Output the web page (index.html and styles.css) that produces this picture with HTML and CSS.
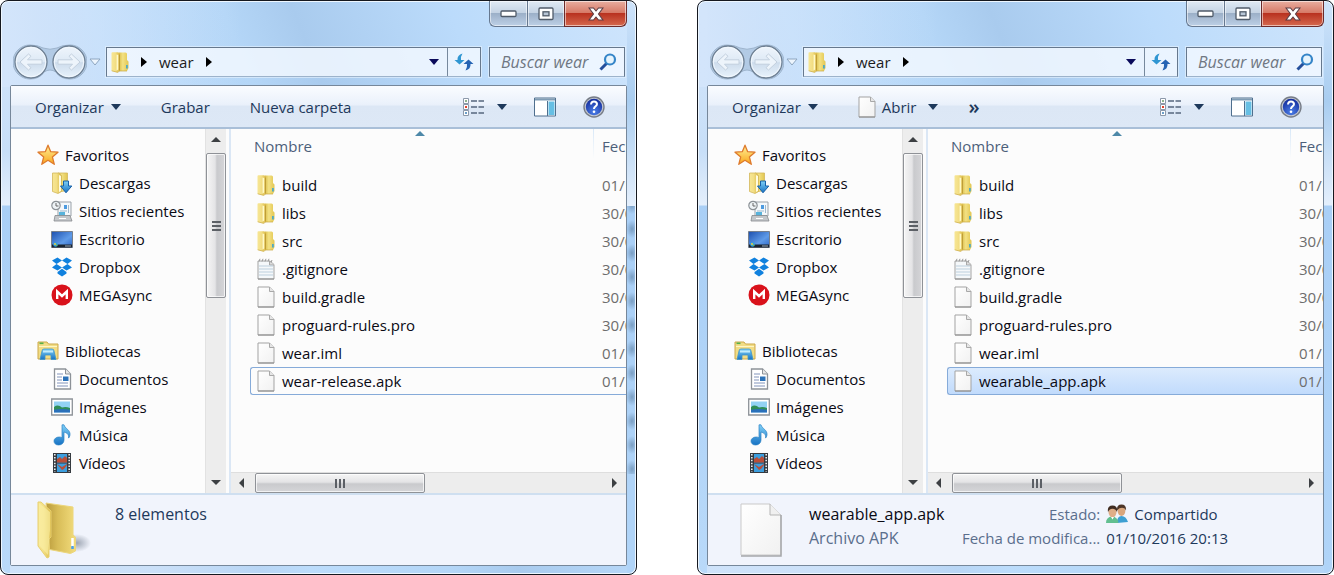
FILE: index.html
```html
<!DOCTYPE html>
<html lang="es">
<head>
<meta charset="utf-8">
<title>wear</title>
<link rel="stylesheet" href="styles.css">
</head>
<body>
<svg class="sprite" aria-hidden="true">
  <defs>
    <linearGradient id="g-folder" x1="0" x2="1"><stop offset="0" stop-color="#f7e694"/><stop offset=".45" stop-color="#f3df86"/><stop offset="1" stop-color="#d9b844"/></linearGradient>
    <linearGradient id="g-leaf" x1="0" x2="1"><stop offset="0" stop-color="#dcc04c"/><stop offset=".4" stop-color="#f3e184"/><stop offset="1" stop-color="#e2c650"/></linearGradient>
    <linearGradient id="g-folder-back" x1="0" x2="1"><stop offset="0" stop-color="#b99a3c"/><stop offset=".4" stop-color="#d8bd58"/><stop offset="1" stop-color="#f2dc7c"/></linearGradient>
    <linearGradient id="g-ball" x1="0" y1="0" x2="0" y2="1"><stop offset="0" stop-color="#eff5fc"/><stop offset=".5" stop-color="#dde9f5"/><stop offset=".52" stop-color="#cddcec"/><stop offset="1" stop-color="#e8f3fc"/></linearGradient>
    <linearGradient id="g-page" x1="0" y1="0" x2="1" y2="1"><stop offset="0" stop-color="#fff"/><stop offset="1" stop-color="#f1f1f1"/></linearGradient>
    <linearGradient id="g-star" x1="0" y1="0" x2="0" y2="1"><stop offset="0" stop-color="#fff39a"/><stop offset="1" stop-color="#f9a51b"/></linearGradient>
    <linearGradient id="g-blue" x1="0" y1="0" x2="0" y2="1"><stop offset="0" stop-color="#7fd0f7"/><stop offset="1" stop-color="#1672c4"/></linearGradient>
    <linearGradient id="g-desk" x1="0" y1="0" x2="1" y2="1"><stop offset="0" stop-color="#1c4fae"/><stop offset=".6" stop-color="#5f9be8"/><stop offset="1" stop-color="#2b64c4"/></linearGradient>
    <radialGradient id="g-help" cx=".5" cy=".8" r=".8"><stop offset="0" stop-color="#4c7fe8"/><stop offset="1" stop-color="#122a9a"/></radialGradient>
    <radialGradient id="g-shade"><stop offset="0" stop-color="#7a8494" stop-opacity=".7"/><stop offset="1" stop-color="#7a8494" stop-opacity="0"/></radialGradient>
  </defs>
  <symbol id="i-folder" viewBox="0 0 18 22">
    <path d="M8 1.500h6.500q1.500 0 1.500 1.500v6l1.500 1.500V17L16 20H8z" fill="url(#g-leaf)"/>
    <path d="M.5 2q0-.8 1-.8H7q2 .3 2 2.300v15q0 1.500-1.800 2.200L6.500 21.500.5 19.800z" fill="url(#g-folder)"/>
    <path d="M5.500 3.500 7.200 4v14.500l-1.700 1z" fill="#fff9c8"/>
    <path d="M8.500 3.500v16" stroke="#bb9a35" stroke-width=".9"/>
    <path d="M.7 19.800 6.500 21.300 9 20h7" fill="none" stroke="#c9a83e" stroke-width=".7"/>
    <rect x="15" y="14" width="1.800" height="3.500" fill="#4fa9c4"/>
  </symbol>
  <symbol id="i-file" viewBox="0 0 18 22">
    <path d="M1 1h11.500L17 5.500V21H1z" fill="url(#g-page)" stroke="#a3a3a3"/>
    <path d="M12.500 1v4.500H17" fill="#e6e6e6" stroke="#a8a8a8"/>
    <path d="M1 21h16" stroke="#8c8c8c"/>
  </symbol>
  <symbol id="i-note" viewBox="0 0 18 22">
    <path d="M1 3h12l4 3.500V21H1z" fill="#f5f8fa" stroke="#a3a3a3"/>
    <path d="M12.500 3v4H17" fill="#ddd" stroke="#a8a8a8"/>
    <path d="M2 8h14M2 11h14M2 14h14M2 17h14" stroke="#bccfdd"/>
    <path d="M2 3.500 3 .8M5 3.500 6 .8M8 3.500 9 .8M11 3.500 12 .8M14 4.500 15 2" stroke="#999"/>
    <path d="M1 21h16" stroke="#8c8c8c"/>
  </symbol>
  <symbol id="i-star" viewBox="0 0 22 22">
    <path d="M11 1.200l2.700 6.500 7.300.5-5.600 4.700 1.900 7.400L11 16.300 4.800 20.300l1.900-7.400L1 8.200l7.300-.5z" fill="url(#g-star)" stroke="#de7a2c" stroke-width="1.300" stroke-linejoin="round"/>
  </symbol>
  <symbol id="i-download" viewBox="0 0 22 22">
    <path d="M7 1h9.500v17.500L7 20z" fill="url(#g-leaf)" stroke="#d3b75a" stroke-width=".8"/>
    <path d="M1.500 1h6l3 2.500v16L7 21.500 1.500 19.500z" fill="url(#g-folder)" stroke="#d3b75a" stroke-width=".8"/>
    <path d="M8 3l2 1v15l-2 1z" fill="#fffbe0"/>
    <path d="M12.500 9h5v5h3.300L15 20.800 9.500 14h3z" fill="url(#g-blue)" stroke="#1760a8"/>
  </symbol>
  <symbol id="i-recent" viewBox="0 0 22 22">
    <path d="M7 2h13v14H7z" fill="#f4f8fb" stroke="#9aa1a8"/>
    <path d="M13 5h3v4h-3z" fill="#4d9be0"/><path d="M17.500 5v8M9 11h7" stroke="#9db8cc"/>
    <path d="M8 12h6v4H8z" fill="#57b3dc"/>
    <path d="M4 15.500h15l2 5.500H3z" fill="#c4c7ca" stroke="#85898d" stroke-width=".8"/><path d="M8 18.500h7" stroke="#fff"/>
    <circle cx="5" cy="5.500" r="4.200" fill="#eef3f6" stroke="#8c9297" stroke-width="1.200"/>
    <path d="M5 3v3h2.500" fill="none" stroke="#666"/>
  </symbol>
  <symbol id="i-desktop" viewBox="0 0 22 22">
    <path d="M.5 3.500h21v16H.5z" fill="url(#g-desk)" stroke="#767f8b"/>
    <path d="M1 16.500h20v3H1z" fill="#1b2430"/><path d="M14 18h6" stroke="#9ab"/>
    <circle cx="4.500" cy="16.500" r="2.300" fill="#2f9fe0"/><circle cx="4" cy="16" r=".9" fill="#ffd12e"/><circle cx="5.600" cy="17.200" r=".8" fill="#79c143"/>
  </symbol>
  <symbol id="i-dropbox" viewBox="0 0 22 22">
    <path d="M6.500 1.500l4.500 3-5.500 3.500L1 4.500zM15.500 1.500 21 4.500 16.500 8 11 4.500zM1 11.500 5.500 8l5.500 3.500-4.500 3zM16.500 8l4.500 3.500-5.500 3-4.500-3zM6.500 16l4.500-3.300 4.500 3.300v1.500L11 20.500 6.500 17.500z" fill="#1081de"/>
  </symbol>
  <symbol id="i-mega" viewBox="0 0 22 22">
    <circle cx="11" cy="11" r="10.500" fill="#d9121b"/>
    <path d="M6.200 15V7.500L11 12l4.800-4.500V15" fill="none" stroke="#fff" stroke-width="2.400"/>
  </symbol>
  <symbol id="i-library" viewBox="0 0 22 22">
    <path d="M1 2h9l1.500 2H21v15H1z" fill="#f1dc85" stroke="#cda94a"/>
    <path d="M2.500 3.300h4" stroke="#55b04a" stroke-width="1.600"/><path d="M2 6.500h18" stroke="#fff6c4"/>
    <path d="M5 11q0-2 2-2h8q2 0 2 2l2 8.500h-5V15H8v4.500H3z" fill="url(#g-blue)" stroke="#3f95c8" stroke-width=".8"/>
    <path d="M6 10.500h10v2H6z" fill="#c2ebfb"/>
  </symbol>
  <symbol id="i-doc" viewBox="0 0 22 22">
    <path d="M3.500 1h11L19.500 6v15h-16z" fill="#fff" stroke="#8d9298" stroke-width="1.300"/>
    <path d="M14.500 1v5h5" fill="#e8e8e8" stroke="#8d9298"/>
    <path d="M6 6h6M6 9h5M6 12h5M6 15h11M6 18h11" stroke="#8294bb"/><path d="M12 8.500h5.500V13H12z" fill="#2c72b8"/>
  </symbol>
  <symbol id="i-image" viewBox="0 0 22 22">
    <path d="M.7 3h20.600v16H.7z" fill="#fff" stroke="#8d9298" stroke-width="1.300"/>
    <path d="M3 5.500h16v11H3z" fill="#92d2f4"/><path d="M3 11q4-3 8 .5 4-1 8 .5v2H3z" fill="#2f8e58"/><path d="M3 13.800q8-1.500 16 0v2.700H3z" fill="#2a70ba"/>
  </symbol>
  <symbol id="i-music" viewBox="0 0 22 22">
    <path d="M11 .8h2c1 4 6.500 5 6 10-.2 1.700-1 3-1.500 3.300.6-3-.8-5-4.500-6.100V16c0 3-2.500 5-5.500 5S3 19.200 3 17s2.300-4 5.200-4c1.200 0 2 .2 2.800.7z" fill="url(#g-blue)" stroke="#2c82c4" stroke-width=".7"/>
  </symbol>
  <symbol id="i-video" viewBox="0 0 22 22">
    <path d="M2 1h18v20H2z" fill="#353a40"/><path d="M6 2h10v8.500H6zM6 11.500h10V20H6z" fill="#3c9ede"/>
    <path d="M6 7l3-2 2 2 3-3 2 2v4.500H6zM6 12l5 3 5-3v1l-3 4-2 1z" fill="#b94e38"/>
    <path d="M3.800 2v18M18.200 2v18" stroke="#e9eef2" stroke-width="1.600" stroke-dasharray="1.500 1.400"/>
  </symbol>
  <symbol id="i-bigfolder" viewBox="0 0 54 60">
    <ellipse cx="40" cy="43" rx="14" ry="9" fill="url(#g-shade)"/>
    <path d="M9 3 36 7v28l2.500 2v14l-5 2.500-21-4z" fill="url(#g-folder-back)" stroke="#ecd67c"/>
    <path d="M1 2h3l10 9v26l-2 2v18l-2 1L1 46z" fill="url(#g-folder)" stroke="#e8d070"/>
    <path d="M2 3 13 12v18l-2 25L2 45z" fill="#fbf0a6" opacity=".65"/>
    <path d="M35.500 38v9" stroke="#fff" stroke-width="2.500"/><path d="M35.500 46v3" stroke="#4aa0e8" stroke-width="2.500"/>
  </symbol>
  <symbol id="i-bigfile" viewBox="0 0 42 54">
    <path d="M1 1h29l11 11v40H1z" fill="url(#g-page)" stroke="#c9c9c9"/>
    <path d="M30 1v11h11" fill="#f0f0f0" stroke="#b5b5b5"/><path d="M1 53h40V12" fill="none" stroke="#a6a8ab" stroke-width="1.500"/>
  </symbol>
  <symbol id="i-nav" viewBox="0 0 74 36">
    <path d="M17 1q8 0 13 3 7 2.500 14 0 5-3 13-3a17 17 0 0 1 0 34q-10 0-14-7-6-4-12 0-4 7-14 7a17 17 0 0 1 0-34z" fill="#a9c3de" opacity=".75" stroke="#8ea5be"/>
    <circle cx="18" cy="18" r="16" fill="url(#g-ball)" stroke="#6f8093" stroke-width="1.300"/><circle cx="56" cy="18" r="16" fill="url(#g-ball)" stroke="#6f8093" stroke-width="1.300"/>
    <circle cx="18" cy="18" r="14.700" fill="none" stroke="#f2f8fe"/><circle cx="56" cy="18" r="14.700" fill="none" stroke="#f2f8fe"/>
    <path d="M7 18l8.500-8 2.500 2.200-3.500 3.600H29v4.400H14.500l3.500 3.600-2.500 2.200z" fill="#edf4fb" stroke="#c3d0de"/>
    <path d="M67 18l-8.500-8-2.500 2.200 3.500 3.600H45v4.400h14.500L56 23.800l2.500 2.200z" fill="#edf4fb" stroke="#c3d0de"/>
  </symbol>
  <symbol id="i-chev" viewBox="0 0 12 8"><path d="M1 1h10L6 7z" fill="#edf5fd" stroke="#8ea6c0"/></symbol>
  <symbol id="i-right" viewBox="0 0 6 10"><path d="M0 0l6 5-6 5z" fill="#000"/></symbol>
  <symbol id="i-down" viewBox="0 0 10 6"><path d="M0 0h10L5 6z" fill="currentColor"/></symbol>
  <symbol id="i-refresh" viewBox="0 0 20 18">
    <path d="M8.500.5Q3 2 3.500 7H.5L5.500 11.500 10.500 7H7Q6.500 3.500 8.500.5z" fill="#2f96d2"/><path d="M11.500 17.500q5.500-1.500 5-6.500H19.500L14.500 6.500 9.500 11H13q.5 3.500-1.500 6.500z" fill="#2564b4"/>
  </symbol>
  <symbol id="i-search" viewBox="0 0 18 18">
    <path d="M1.500 16.500 8 10" stroke="#244f9c" stroke-width="3"/><circle cx="11" cy="6.500" r="5" fill="#e6f4fd" stroke="#3585c8" stroke-width="2.200"/>
  </symbol>
  <symbol id="i-view" viewBox="0 0 22 18">
    <path d="M.5.500h5v5h-5zM.5 6.500h5v5h-5zM.5 12.500h5v5h-5z" fill="#fff" stroke="#8c99aa"/>
    <path d="M2 3h2" stroke="#6a9a6a" stroke-width="1.500"/><path d="M2 9h2" stroke="#e0432c" stroke-width="2"/><path d="M2 15h2" stroke="#3b7fb8" stroke-width="1.500"/>
    <path d="M8 3h6M15.500 3H21M8 9h6M15.500 9H21M8 15h6M15.500 15H21" stroke="#56677e" stroke-width="1.300"/>
  </symbol>
  <symbol id="i-pane" viewBox="0 0 22 20">
    <path d="M.5 1h21v18H.5z" fill="#fff" stroke="#4f6f8e"/><path d="M1 2.500h20" stroke="#7f9cb5" stroke-width="2"/><path d="M13.500 4v15" stroke="#4f6f8e"/><path d="M14.500 4.500h6v13.500h-6z" fill="#66bfe4"/>
  </symbol>
  <symbol id="i-help" viewBox="0 0 22 22">
    <circle cx="11" cy="11" r="10" fill="#c3c8d1" stroke="#777d87" stroke-width="1.400"/><circle cx="11" cy="11" r="8.200" fill="url(#g-help)"/>
    <path d="M8 8.500q.2-3 3-3t3 2.600q0 1.400-1.500 2.300T11 13" fill="none" stroke="#fff" stroke-width="2"/><circle cx="11" cy="15.800" r="1.300" fill="#fff"/>
  </symbol>
  <symbol id="i-min" viewBox="0 0 18 8"><rect x="1" y="1" width="15" height="5.500" rx="1" fill="#fff" stroke="#505b69" stroke-width="1.300"/></symbol>
  <symbol id="i-max" viewBox="0 0 16 14"><rect x="1" y="1" width="14" height="11.500" rx="1" fill="#fff" stroke="#505b69" stroke-width="1.300"/><rect x="5" y="4.800" width="6" height="4" fill="#b8c6d6" stroke="#505b69" stroke-width="1.300"/></symbol>
  <symbol id="i-close" viewBox="0 0 16 14"><path d="M1 1h4.500L8 4l2.500-3H15l-4.500 6L15 13h-4.500L8 10l-2.500 3H1l4.500-6z" fill="#fff" stroke="#5c3f46" stroke-width="1.100"/></symbol>
  <symbol id="i-people" viewBox="0 0 22 20">
    <path d="M11 19q0-7 4.500-7T22 18z" fill="#3d9fd2"/><ellipse cx="15.500" cy="7" rx="3.800" ry="5" fill="#d9a67c"/><path d="M11 6.500q-.5-6 4.500-6t4.500 6q-1-2.800-4-2.800t-5 2.800z" fill="#4d3527"/>
    <path d="M0 19q0-6 6-6.500 6 .5 6.500 6.500z" fill="#62bf90"/><ellipse cx="6.500" cy="8" rx="4" ry="5.200" fill="#dfae88"/><path d="M2 8Q1 1.500 6.500 1.500T11 8Q9.500 4.800 6.500 4.800T2 8z" fill="#3f2b20"/><path d="M5 13l1.500 2.500L8 13z" fill="#fff"/>
  </symbol>
</svg>

<main class="desktop">
  <section class="window busy">
    <header class="frame">
      <div class="caption">
        <button class="cap" aria-label="Minimizar"><svg width="18" height="8"><use href="#i-min"/></svg></button>
        <button class="cap" aria-label="Maximizar"><svg width="16" height="14"><use href="#i-max"/></svg></button>
        <button class="cap close" aria-label="Cerrar"><svg width="16" height="14"><use href="#i-close"/></svg></button>
      </div>
      <div class="navbar">
        <button class="history" aria-label="Atrás y adelante"><svg width="74" height="36"><use href="#i-nav"/></svg></button>
        <svg class="chev" width="12" height="8"><use href="#i-chev"/></svg>
        <div class="address">
          <svg width="18" height="22"><use href="#i-folder"/></svg>
          <svg class="sep" width="6" height="10"><use href="#i-right"/></svg>
          <a class="crumb" href="#wear">wear</a>
          <svg width="6" height="10"><use href="#i-right"/></svg>
          <button class="drop" aria-label="Ubicaciones anteriores"><svg width="10" height="6"><use href="#i-down"/></svg></button>
          <button class="refresh" aria-label="Actualizar"><svg width="20" height="18"><use href="#i-refresh"/></svg></button>
        </div>
        <label class="search"><input type="text" placeholder="Buscar wear" aria-label="Buscar wear"><svg width="18" height="18"><use href="#i-search"/></svg></label>
      </div>
    </header>
    <div class="client">
      <div class="toolbar">
        <button class="tool">Organizar <svg width="10" height="6"><use href="#i-down"/></svg></button>
        <button class="tool">Grabar</button>
        <button class="tool">Nueva carpeta</button>
        <div class="views">
          <button class="tool wide" aria-label="Cambiar la vista"><svg width="22" height="18"><use href="#i-view"/></svg><svg width="10" height="6"><use href="#i-down"/></svg></button>
          <button class="tool" aria-label="Panel de vista previa"><svg width="22" height="20"><use href="#i-pane"/></svg></button>
          <button class="tool" aria-label="Ayuda"><svg width="22" height="22"><use href="#i-help"/></svg></button>
        </div>
      </div>
      <div class="body">
        <nav class="tree">
          <ul>
            <li class="root"><a href="#fav"><svg width="22" height="22"><use href="#i-star"/></svg>Favoritos</a></li>
            <li><a href="#des"><svg width="22" height="22"><use href="#i-download"/></svg>Descargas</a></li>
            <li><a href="#sit"><svg width="22" height="22"><use href="#i-recent"/></svg>Sitios recientes</a></li>
            <li><a href="#esc"><svg width="22" height="22"><use href="#i-desktop"/></svg>Escritorio</a></li>
            <li><a href="#dro"><svg width="22" height="22"><use href="#i-dropbox"/></svg>Dropbox</a></li>
            <li><a href="#meg"><svg width="22" height="22"><use href="#i-mega"/></svg>MEGAsync</a></li>
          </ul>
          <ul>
            <li class="root"><a href="#bib"><svg width="22" height="22"><use href="#i-library"/></svg>Bibliotecas</a></li>
            <li><a href="#doc"><svg width="22" height="22"><use href="#i-doc"/></svg>Documentos</a></li>
            <li><a href="#ima"><svg width="22" height="22"><use href="#i-image"/></svg>Imágenes</a></li>
            <li><a href="#mus"><svg width="22" height="22"><use href="#i-music"/></svg>Música</a></li>
            <li><a href="#vid"><svg width="22" height="22"><use href="#i-video"/></svg>Vídeos</a></li>
          </ul>
        </nav>
        <div class="vbar"><i class="arrow up"></i><div class="thumb"><i class="grip"></i></div><i class="arrow down"></i></div>
        <div class="files">
          <div class="list">
            <table>
              <thead><tr><th class="name">Nombre</th><th class="date">Fecha</th></tr></thead>
              <tbody>
                <tr><td><span><svg width="18" height="22"><use href="#i-folder"/></svg>build</span></td><td>01/10</td></tr>
                <tr><td><span><svg width="18" height="22"><use href="#i-folder"/></svg>libs</span></td><td>30/09</td></tr>
                <tr><td><span><svg width="18" height="22"><use href="#i-folder"/></svg>src</span></td><td>30/09</td></tr>
                <tr><td><span><svg width="18" height="22"><use href="#i-note"/></svg>.gitignore</span></td><td>30/09</td></tr>
                <tr><td><span><svg width="18" height="22"><use href="#i-file"/></svg>build.gradle</span></td><td>30/09</td></tr>
                <tr><td><span><svg width="18" height="22"><use href="#i-file"/></svg>proguard-rules.pro</span></td><td>30/09</td></tr>
                <tr><td><span><svg width="18" height="22"><use href="#i-file"/></svg>wear.iml</span></td><td>01/10</td></tr>
                <tr class="focused"><td><span><svg width="18" height="22"><use href="#i-file"/></svg>wear-release.apk</span></td><td>01/10</td></tr>
              </tbody>
            </table>
          </div>
          <div class="hbar"><i class="arrow left"></i><div class="thumb"><i class="grip"></i></div><i class="arrow right"></i></div>
        </div>
      </div>
      <footer class="details">
        <svg class="big" width="54" height="60"><use href="#i-bigfolder"/></svg>
        <p class="count">8 elementos</p>
      </footer>
    </div>
  </section>

  <section class="window">
    <header class="frame">
      <div class="caption">
        <button class="cap" aria-label="Minimizar"><svg width="18" height="8"><use href="#i-min"/></svg></button>
        <button class="cap" aria-label="Maximizar"><svg width="16" height="14"><use href="#i-max"/></svg></button>
        <button class="cap close" aria-label="Cerrar"><svg width="16" height="14"><use href="#i-close"/></svg></button>
      </div>
      <div class="navbar">
        <button class="history" aria-label="Atrás y adelante"><svg width="74" height="36"><use href="#i-nav"/></svg></button>
        <svg class="chev" width="12" height="8"><use href="#i-chev"/></svg>
        <div class="address">
          <svg width="18" height="22"><use href="#i-folder"/></svg>
          <svg class="sep" width="6" height="10"><use href="#i-right"/></svg>
          <a class="crumb" href="#wear">wear</a>
          <svg width="6" height="10"><use href="#i-right"/></svg>
          <button class="drop" aria-label="Ubicaciones anteriores"><svg width="10" height="6"><use href="#i-down"/></svg></button>
          <button class="refresh" aria-label="Actualizar"><svg width="20" height="18"><use href="#i-refresh"/></svg></button>
        </div>
        <label class="search"><input type="text" placeholder="Buscar wear" aria-label="Buscar wear"><svg width="18" height="18"><use href="#i-search"/></svg></label>
      </div>
    </header>
    <div class="client">
      <div class="toolbar">
        <button class="tool">Organizar <svg width="10" height="6"><use href="#i-down"/></svg></button>
        <button class="tool open"><svg width="18" height="22"><use href="#i-file"/></svg>Abrir <svg class="menu" width="10" height="6"><use href="#i-down"/></svg></button>
        <button class="tool more">»</button>
        <div class="views">
          <button class="tool wide" aria-label="Cambiar la vista"><svg width="22" height="18"><use href="#i-view"/></svg><svg width="10" height="6"><use href="#i-down"/></svg></button>
          <button class="tool" aria-label="Panel de vista previa"><svg width="22" height="20"><use href="#i-pane"/></svg></button>
          <button class="tool" aria-label="Ayuda"><svg width="22" height="22"><use href="#i-help"/></svg></button>
        </div>
      </div>
      <div class="body">
        <nav class="tree">
          <ul>
            <li class="root"><a href="#fav"><svg width="22" height="22"><use href="#i-star"/></svg>Favoritos</a></li>
            <li><a href="#des"><svg width="22" height="22"><use href="#i-download"/></svg>Descargas</a></li>
            <li><a href="#sit"><svg width="22" height="22"><use href="#i-recent"/></svg>Sitios recientes</a></li>
            <li><a href="#esc"><svg width="22" height="22"><use href="#i-desktop"/></svg>Escritorio</a></li>
            <li><a href="#dro"><svg width="22" height="22"><use href="#i-dropbox"/></svg>Dropbox</a></li>
            <li><a href="#meg"><svg width="22" height="22"><use href="#i-mega"/></svg>MEGAsync</a></li>
          </ul>
          <ul>
            <li class="root"><a href="#bib"><svg width="22" height="22"><use href="#i-library"/></svg>Bibliotecas</a></li>
            <li><a href="#doc"><svg width="22" height="22"><use href="#i-doc"/></svg>Documentos</a></li>
            <li><a href="#ima"><svg width="22" height="22"><use href="#i-image"/></svg>Imágenes</a></li>
            <li><a href="#mus"><svg width="22" height="22"><use href="#i-music"/></svg>Música</a></li>
            <li><a href="#vid"><svg width="22" height="22"><use href="#i-video"/></svg>Vídeos</a></li>
          </ul>
        </nav>
        <div class="vbar"><i class="arrow up"></i><div class="thumb"><i class="grip"></i></div><i class="arrow down"></i></div>
        <div class="files">
          <div class="list">
            <table>
              <thead><tr><th class="name">Nombre</th><th class="date">Fecha</th></tr></thead>
              <tbody>
                <tr><td><span><svg width="18" height="22"><use href="#i-folder"/></svg>build</span></td><td>01/10</td></tr>
                <tr><td><span><svg width="18" height="22"><use href="#i-folder"/></svg>libs</span></td><td>30/09</td></tr>
                <tr><td><span><svg width="18" height="22"><use href="#i-folder"/></svg>src</span></td><td>30/09</td></tr>
                <tr><td><span><svg width="18" height="22"><use href="#i-note"/></svg>.gitignore</span></td><td>30/09</td></tr>
                <tr><td><span><svg width="18" height="22"><use href="#i-file"/></svg>build.gradle</span></td><td>30/09</td></tr>
                <tr><td><span><svg width="18" height="22"><use href="#i-file"/></svg>proguard-rules.pro</span></td><td>30/09</td></tr>
                <tr><td><span><svg width="18" height="22"><use href="#i-file"/></svg>wear.iml</span></td><td>01/10</td></tr>
                <tr class="focused selected"><td><span><svg width="18" height="22"><use href="#i-file"/></svg>wearable_app.apk</span></td><td>01/10</td></tr>
              </tbody>
            </table>
          </div>
          <div class="hbar"><i class="arrow left"></i><div class="thumb"><i class="grip"></i></div><i class="arrow right"></i></div>
        </div>
      </div>
      <footer class="details">
        <svg class="big page" width="42" height="54"><use href="#i-bigfile"/></svg>
        <div class="about"><p class="title">wearable_app.apk</p><p class="kind">Archivo APK</p></div>
        <dl class="props">
          <dt>Estado:</dt><dd><svg width="22" height="20"><use href="#i-people"/></svg>Compartido</dd>
          <dt>Fecha de modifica...</dt><dd>01/10/2016 20:13</dd>
        </dl>
      </footer>
    </div>
  </section>
</main>
</body>
</html>
```
FILE: styles.css
```css
* { box-sizing: border-box; }
body {
  margin: 0;
  background: #fff;
  color: #0a0a14;
  font: 15px/24px "Open Sans", "Noto Sans", sans-serif;
}
button { margin: 0; padding: 0; border: 0; background: none; font: inherit; color: inherit; }
a { color: inherit; text-decoration: none; }
ul, dl, dd, p { margin: 0; padding: 0; list-style: none; }
svg { flex: none; display: block; }
.sprite { position: absolute; width: 0; height: 0; }

.desktop { display: flex; gap: 60px; min-height: 100vh; }
.window {
  --left: linear-gradient(#d4e6fb 0, #c8dff8 150px, #e4effc 204px, #a9cff6 205px, #b9d9f9 100%) left / 9px 100% no-repeat;
  --right: linear-gradient(#cfe4fb 0, #a9cdf0 100px, #e4effc 204px, #a9cff6 205px, #b0d4f8 100%) right / 9px 100% no-repeat;
  --glass: linear-gradient(68deg, #cfe3fa 0, #cbe0f8 18%, #b9d6f5 30%, #bcdcfb 36%, #b4d6f7 52%, #a9cbee 60%, #bbdbfb 78%, #cfe5fc 100%);
  flex: 1;
  min-width: 0;
  display: flex;
  flex-direction: column;
  padding: 0 9px 8px;
  border: 1px solid #15181f;
  border-radius: 8px;
  box-shadow: inset 0 0 0 1px #eef7ff;
  background:
    linear-gradient(90deg, #d3e5fb, rgba(211, 229, 251, 0)) left top / 240px 86px no-repeat,
    var(--left), var(--right), var(--glass);
}
.busy {
  background:
    linear-gradient(90deg, #d3e5fb, rgba(211, 229, 251, 0)) left top / 240px 86px no-repeat,
    linear-gradient(#cfe4fb 0, #a9cdf0 100px, #e4effc 204px) right top / 9px 205px no-repeat,
    linear-gradient(#b0d4f8, #b0d4f8) right bottom / 9px 100px no-repeat,
    radial-gradient(ellipse 6px 9px at 5px 12px, rgba(70, 105, 140, .5), transparent) right top / 9px 24px repeat-y,
    var(--left), var(--right), var(--glass);
}

.caption { display: flex; justify-content: flex-end; height: 26px; }
.cap {
  display: grid;
  place-items: center;
  width: 37px;
  border: 1px solid #66788f;
  border-top: 0;
  border-right-width: 0;
  background: linear-gradient(#e0eaf4, #c3d2e3 48%, #9cb0c8 50%, #bdd0e6);
  box-shadow: inset 0 0 0 1px rgba(255, 255, 255, .55);
}
.cap:first-child { width: 38px; border-bottom-left-radius: 6px; }
.close {
  width: 63px;
  border-color: #6b2b2b;
  border-right-width: 1px;
  border-bottom-right-radius: 6px;
  background: linear-gradient(#e9aea0, #d67966 48%, #b93220 50%, #d5694e);
}

.navbar { display: flex; align-items: center; height: 58px; padding: 16px 2px 5px 3px; }
.history { height: 36px; }
.chev { margin: 0 5px 0 2px; }
.address, .search {
  display: flex;
  align-items: center;
  height: 30px;
  border: 1px solid #66788d;
  border-bottom-color: #9db3cb;
  background: rgba(244, 249, 255, .82);
  box-shadow: 0 0 0 1px rgba(232, 243, 255, .6);
}
.address { flex: 1; min-width: 0; padding-left: 4px; }
.sep { margin: 0 12px; }
.crumb { margin-right: 12px; color: #1c1c1c; }
.drop { margin-left: auto; padding: 8px; color: #0a0a5a; }
.refresh { display: grid; place-items: center; align-self: stretch; width: 33px; border-left: 1px solid #76889c; }
.search { width: 136px; margin-left: 8px; padding: 0 7px 0 11px; }
.search input { flex: 1; min-width: 0; padding: 0; border: 0; outline: 0; background: none; font: italic 16px/24px "Open Sans", "Noto Sans", sans-serif; }
.search input::placeholder { color: #6f7782; opacity: 1; }

.client { flex: 1; display: flex; flex-direction: column; min-height: 0; border: 1px solid #76879a; border-radius: 2px; background: #fcfcfc; }
.toolbar {
  display: flex;
  align-items: center;
  gap: 40px;
  height: 43px;
  padding: 0 21px 0 24px;
  border-bottom: 2px solid #a9bfd8;
  background: linear-gradient(#fafcff, #eaf1fb 45%, #dce7f5 50%, #dde8f6);
  color: #1e395b;
}
.tool { display: flex; align-items: center; gap: 7px; white-space: nowrap; }
.open { gap: 6px; }
.menu { margin-left: 6px; }
.more { margin-left: -10px; font-size: 20px; font-weight: 600; }
.views { display: flex; align-items: center; gap: 27px; margin-left: auto; }
.wide { gap: 12px; }

.body { flex: 1; display: flex; min-height: 0; }
.tree { flex: 0 0 194px; padding: 12px 0; }
.tree ul + ul { margin-top: 28px; }
.tree a { display: flex; align-items: center; gap: 6px; height: 28px; padding-left: 40px; white-space: nowrap; }
.tree .root a { padding-left: 26px; }

.vbar, .hbar { display: flex; align-items: center; background: #ededed; }
.vbar { flex: 0 0 21px; flex-direction: column; padding: 8px 0; border-left: 1px solid #e2e2e2; }
.vbar .thumb { width: 20px; height: 145px; margin-top: 11px; background: linear-gradient(90deg, #f5f5f5, #e4e4e6 45%, #c9cacd 55%, #d5d5d8); }
.vbar .down { margin-top: auto; }
.thumb { display: grid; place-items: center; border: 1px solid #8f9297; border-radius: 2px; box-shadow: inset 0 0 0 1px rgba(255, 255, 255, .7); }
.grip { width: 9px; height: 10px; background: repeating-linear-gradient(#5c6066 0 2px, transparent 2px 4px); }
.hbar { height: 21px; padding: 0 9px 0 8px; border-top: 1px solid #dedede; }
.hbar .thumb { width: 170px; height: 20px; margin-left: 11px; background: linear-gradient(#f5f5f5, #e4e4e6 45%, #c9cacd 55%, #d5d5d8); }
.hbar .grip { width: 10px; height: 9px; background: repeating-linear-gradient(90deg, #5c6066 0 2px, transparent 2px 4px); }
.hbar .right { margin-left: auto; }
.arrow { border: 5px solid transparent; }
.up { border-top: 0; border-bottom-color: #3d4043; }
.down { border-bottom: 0; border-top-color: #3d4043; }
.left { border-left: 0; border-right-color: #3d4043; }
.right { border-right: 0; border-left-color: #3d4043; }

.files { flex: 1; min-width: 0; display: flex; flex-direction: column; margin-left: 3px; border-left: 2px solid #dbe7f5; }
.list { flex: 1; overflow: hidden; padding-left: 19px; }
table { width: calc(100% + 40px); border-spacing: 0; table-layout: fixed; }
th { position: relative; height: 42px; padding: 0 0 8px 4px; font-weight: 400; text-align: left; color: #4c607a; white-space: nowrap; }
.name { width: 344px; background: linear-gradient(#d8e8f8, #fcfcfc) right top / 1px 30px no-repeat; }
.name::after { content: ""; position: absolute; top: 2px; left: 50%; margin-left: -7px; border: 5px solid transparent; border-top: 0; border-bottom-color: #4d88a8; }
.date { padding-left: 8px; }
td { height: 28px; padding: 0 0 0 8px; white-space: nowrap; color: #6d6d6d; border: 1px solid transparent; border-width: 1px 0; }
td:first-child { padding-left: 6px; border-left-width: 1px; color: #0a0a14; }
td span { display: flex; align-items: center; gap: 7px; }
.focused td { border-color: #86abd9; }
.focused td:first-child { border-radius: 3px 0 0 3px; }
.selected td { background: linear-gradient(#dcebfd, #c1dbfc); }

.details { display: flex; align-items: flex-start; height: 72px; padding-left: 26px; border-top: 2px solid #cfdff0; background: #f1f4fc; }
.big { margin-top: 5px; }
.page { margin: 8px 0 0 6px; }
.count { margin: 7px 0 0 24px; color: #1e395b; font-size: 16px; }
.about, .props { padding-top: 7px; }
.about { margin-left: 27px; }
.title { font-size: 16px; }
.kind { color: #5a6e8c; font-size: 16px; }
.props { display: grid; grid-template-columns: 156px auto; column-gap: 6px; color: #1e395b; }
.props dt { text-align: right; color: #5a6e8c; white-space: nowrap; }
.props dd { display: flex; align-items: center; gap: 6px; }
```
